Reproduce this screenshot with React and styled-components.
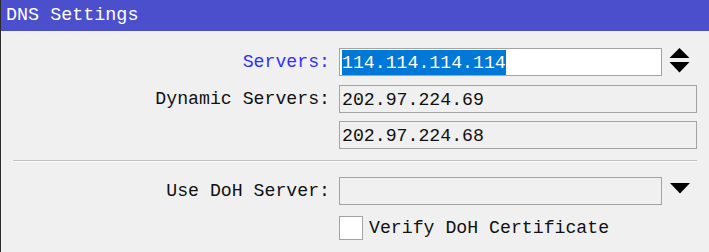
import React from 'react';
import styled, { createGlobalStyle } from 'styled-components';

const GlobalStyle = createGlobalStyle`
  html, body {
    margin: 0;
    padding: 0;
    background: #f0f0f0;
  }
  body {
    font-family: "Liberation Mono", "DejaVu Sans Mono", monospace;
    font-size: 18.2px;
  }
`

const Window = styled.div`
  width: 709px;
  height: 252px;
  box-sizing: border-box;
  border-left: 1px solid #2b2b2b;
  background: #f0f0f0;
  overflow: hidden;
`

const TitleBar = styled.div`
  height: 31px;
  background: #4b4fcc;
  color: #ffffff;
  display: flex;
  align-items: center;
  padding-left: 5px;
  font-size: 18.4px;
`

const Form = styled.div`
  display: grid;
  grid-template-columns: 329px 358px;
  column-gap: 9px;
  padding-top: 17px;
`

const Label = styled.div`
  grid-column: 1;
  text-align: right;
  color: ${props => (props.active ? '#3030ff' : '#111111')};
  height: 28px;
  line-height: 29px;
  white-space: nowrap;
`

const FieldCell = styled.div`
  grid-column: 2;
  display: flex;
  align-items: center;
  margin-top: ${props => props.top || 0}px;
`

const Row = styled.div`
  display: contents;
`

const Input = styled.div`
  box-sizing: border-box;
  width: ${props => props.width}px;
  height: 28px;
  border: 1px solid #a3a3a3;
  background: ${props => (props.editable ? '#ffffff' : '#f0f0f0')};
  padding-left: 2px;
  padding-top: 1px;
  display: flex;
  align-items: center;
  color: #111111;
  white-space: nowrap;
`

const Selected = styled.span`
  background: #0078d7;
  color: #ffffff;
  height: 24px;
  line-height: 24px;
  margin-top: -1px;
  padding-top: 1px;
`

const ArrowButton = styled.div`
  width: 35px;
  display: flex;
  justify-content: center;
  align-items: center;
  svg {
    display: block;
  }
`

const Separator = styled.div`
  grid-column: 1 / span 2;
  margin: 11px 0 15px 12px;
  height: 1px;
  background: #c0c0c0;
  border-bottom: 1px solid #fafafa;
`

const CheckRow = styled.label`
  display: flex;
  align-items: center;
  gap: 6px;
  color: #111111;
  height: 24px;
`

const CheckBox = styled.span`
  box-sizing: border-box;
  width: 24px;
  height: 24px;
  border: 1px solid #a3a3a3;
  background: #ffffff;
`

const UpDown = () => (
  <svg width="21" height="25" viewBox="0 0 21 25">
    <polygon points="10.5,0 20.5,10 0.5,10" fill="#000" />
    <polygon points="0.5,14 20.5,14 10.5,24.5" fill="#000" />
  </svg>
)

const DropDown = () => (
  <svg width="20" height="11" viewBox="0 0 20 11">
    <polygon points="0,0 20,0 10,10.5" fill="#000" />
  </svg>
)

export default function App() {
  return (
    <Window>
      <GlobalStyle />
      <TitleBar>DNS Settings</TitleBar>
      <Form>
        <Row>
          <Label active>Servers:</Label>
          <FieldCell>
            <Input width={324} editable>
              <Selected>114.114.114.114</Selected>
            </Input>
            <ArrowButton style={{ marginTop: '-4px' }}>
              <UpDown />
            </ArrowButton>
          </FieldCell>
        </Row>
        <Row>
          <Label style={{ marginTop: '9px' }}>Dynamic Servers:</Label>
          <FieldCell top={9}>
            <Input width={358}>202.97.224.69</Input>
          </FieldCell>
        </Row>
        <Row>
          <FieldCell top={8}>
            <Input width={358}>202.97.224.68</Input>
          </FieldCell>
        </Row>
        <Separator />
        <Row>
          <Label>Use DoH Server:</Label>
          <FieldCell>
            <Input width={324} />
            <ArrowButton style={{ marginTop: '-6px' }}>
              <DropDown />
            </ArrowButton>
          </FieldCell>
        </Row>
        <Row>
          <FieldCell top={11}>
            <CheckRow>
              <CheckBox />
              Verify DoH Certificate
            </CheckRow>
          </FieldCell>
        </Row>
      </Form>
    </Window>
  );
}
